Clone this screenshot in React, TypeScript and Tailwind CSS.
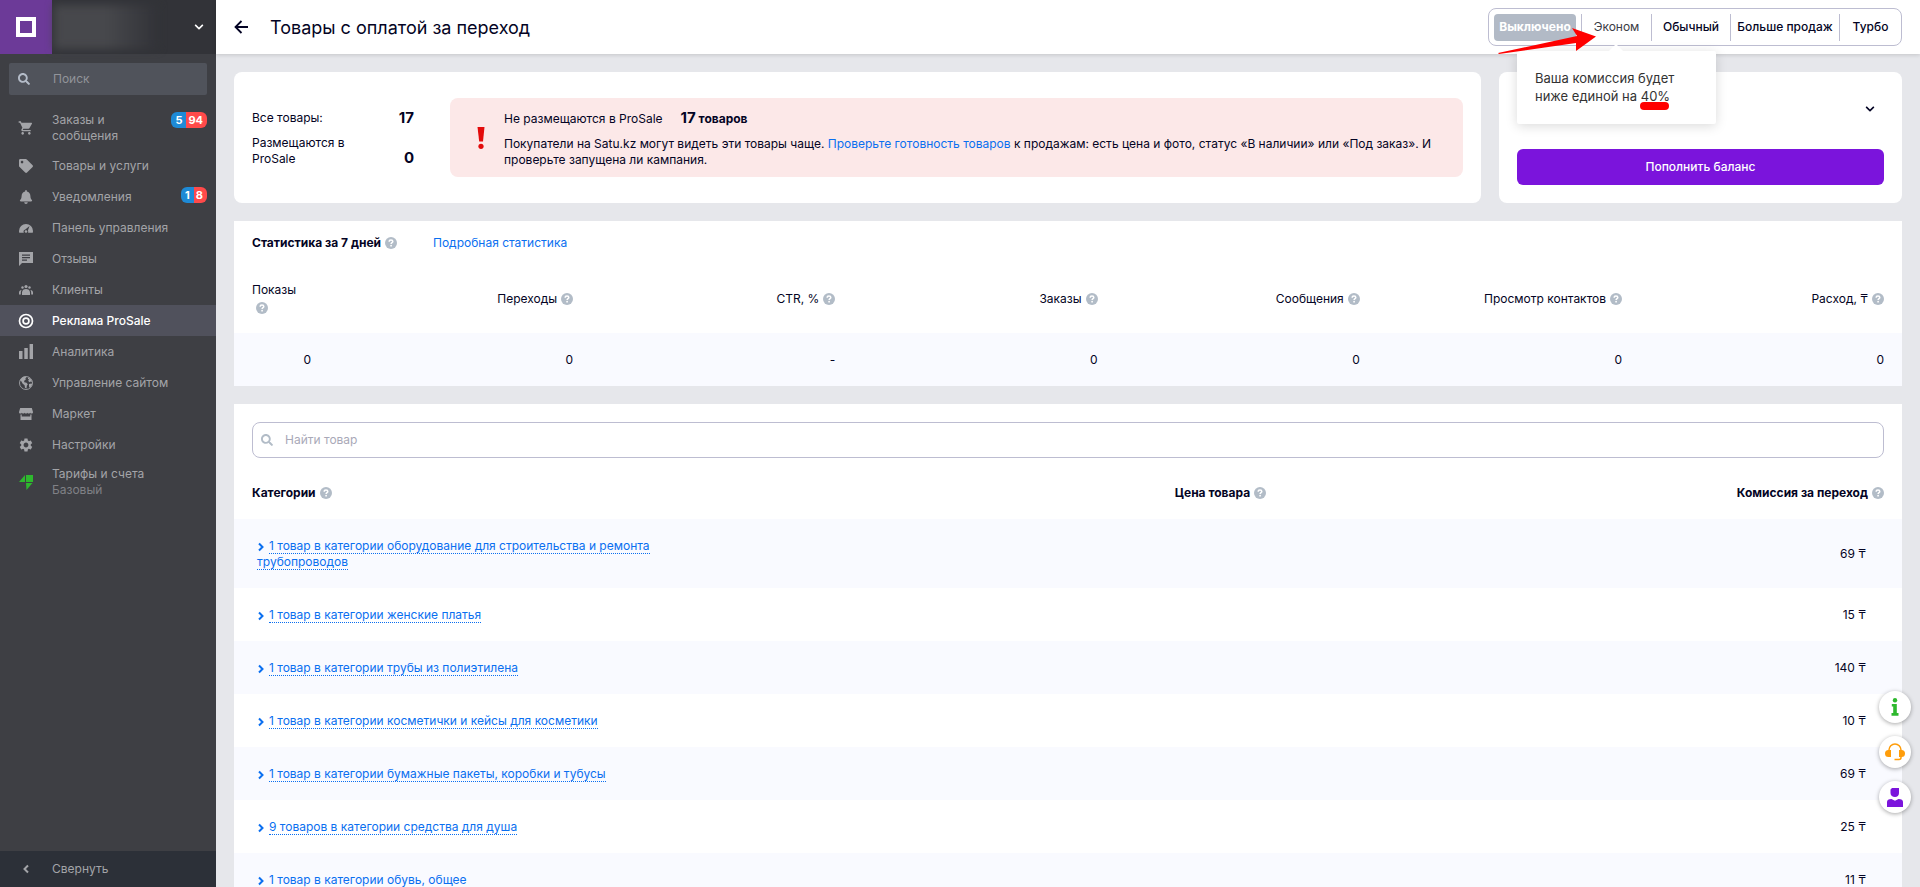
import type { ReactNode } from 'react';
import { FaSearch, FaTag, FaBell, FaChevronDown } from 'react-icons/fa';
import { MdSettings, MdShoppingCart } from 'react-icons/md';

interface MenuItem {
  label: string;
  icon: ReactNode;
  note?: string;
  badges?: [number, number];
  active?: boolean;
}

interface StatColumn {
  title: string;
  value: string;
}

interface Category {
  title: string;
  price: number;
}

const menu: MenuItem[] = [
  { label: 'Заказы и сообщения', icon: <MdShoppingCart className="h-4 w-4" />, badges: [5, 94] },
  { label: 'Товары и услуги', icon: <FaTag /> },
  { label: 'Уведомления', icon: <FaBell />, badges: [1, 8] },
  { label: 'Панель управления', icon: <GaugeIcon /> },
  { label: 'Отзывы', icon: <ReviewIcon /> },
  { label: 'Клиенты', icon: <PeopleIcon /> },
  { label: 'Реклама ProSale', icon: <TargetIcon />, active: true },
  { label: 'Аналитика', icon: <BarsIcon /> },
  { label: 'Управление сайтом', icon: <GlobeIcon /> },
  { label: 'Маркет', icon: <StoreIcon /> },
  { label: 'Настройки', icon: <MdSettings className="h-4 w-4" /> },
  { label: 'Тарифы и счета', icon: <PlanIcon />, note: 'Базовый' },
];

const stats: StatColumn[] = [
  { title: 'Показы', value: '0' },
  { title: 'Переходы', value: '0' },
  { title: 'CTR, %', value: '-' },
  { title: 'Заказы', value: '0' },
  { title: 'Сообщения', value: '0' },
  { title: 'Просмотр контактов', value: '0' },
  { title: 'Расход, ₸', value: '0' },
];

const categories: Category[] = [
  { title: '1 товар в категории оборудование для строительства и ремонта трубопроводов', price: 69 },
  { title: '1 товар в категории женские платья', price: 15 },
  { title: '1 товар в категории трубы из полиэтилена', price: 140 },
  { title: '1 товар в категории косметички и кейсы для косметики', price: 10 },
  { title: '1 товар в категории бумажные пакеты, коробки и тубусы', price: 69 },
  { title: '9 товаров в категории средства для душа', price: 25 },
  { title: '1 товар в категории обувь, общее', price: 11 },
];

function GaugeIcon() {
  return (
    <svg viewBox="0 0 14 14" width="14" height="14" fill="currentColor">
      <path d="M7 3a7 7 0 0 0-7 7c0 .7.1 1.200.3 1.700h4.500A2.300 2.300 0 0 1 6.300 8.600L10.500 5 8.900 9.600c.2.400.3.800.3 1.200 0 .3 0 .6-.1.900h4.600c.2-.5.300-1 .3-1.700a7 7 0 0 0-7-7z" />
      <circle cx="7" cy="10.500" r="1.300" />
    </svg>
  );
}

function ReviewIcon() {
  return (
    <svg viewBox="0 0 14 14" width="14" height="14" fill="currentColor">
      <path fillRule="evenodd" d="M0 0h14v11H3l-3 3zM3 2.500v1.200h8V2.500zM3 5v1.200h8V5zM3 7.500v1.200h5V7.500z" />
    </svg>
  );
}

function PeopleIcon() {
  return (
    <svg viewBox="0 0 14 14" width="14" height="14" fill="currentColor">
      <circle cx="7" cy="3.500" r="1.600" />
      <circle cx="3.500" cy="4.500" r="1.200" />
      <circle cx="10.500" cy="4.500" r="1.200" />
      <path d="M3 12V9.500C3 7 5 6 7 6s4 1 4 3.500V12zM0 11.500V9.500C0 8 1.200 7 2.600 7c-.5.700-.8 1.500-.8 2.500v2zM14 11.500V9.500C14 8 12.800 7 11.400 7c.5.700.8 1.500.8 2.500v2z" />
    </svg>
  );
}

function TargetIcon() {
  return (
    <svg viewBox="0 0 16 16" width="16" height="16" fill="none" stroke="currentColor" strokeWidth="1.700">
      <circle cx="8" cy="8" r="6.500" />
      <circle cx="8" cy="8" r="2.900" />
    </svg>
  );
}

function BarsIcon() {
  return (
    <svg viewBox="0 0 14 15" width="14" height="15" fill="currentColor">
      <path d="M0 7h3.500v8H0zM5.300 4h3.500v11H5.300zM10.600 0H14v15h-3.400z" />
    </svg>
  );
}

function GlobeIcon() {
  return (
    <svg viewBox="0 0 14 14" width="14" height="14" fill="none" stroke="currentColor">
      <circle cx="7" cy="7" r="6.500" strokeWidth=".9" />
      <path
        fill="currentColor"
        stroke="none"
        d="M1 4.500C2 2 4.300.6 6.500.5l1 1.500-1.300.6.6 1.200-1.700 1 .2 1.500 2.200.4 1.300 1.500-1 1.600-.3 2.700-1.500-.8-.4-2.400L3.500 7.500 2.300 5.300zM9 1.200l3 2 1.300 2.600-1.500-.3-1.300.8-1.400-1.500L10.300 3.500 9 3zM10 8l2.600-.6.6 1.300-2.200 3.300-1-1.500z"
      />
    </svg>
  );
}

function StoreIcon() {
  return (
    <svg viewBox="0 0 14 14" width="14" height="14" fill="currentColor">
      <path fillRule="evenodd" d="M1.200 1h11.600L14 5c0 1-.6 1.600-1.400 1.600-.9 0-1.500-.6-1.500-1.200 0 .7-.6 1.200-1.400 1.200S8.400 6 8.400 5.400C8.400 6 7.800 6.600 7 6.600S5.600 6 5.600 5.400c0 .6-.6 1.200-1.300 1.200-.8 0-1.400-.5-1.400-1.200 0 .6-.6 1.200-1.500 1.200C.6 6.600 0 6 0 5zM1.500 7.500h1.200V9.500h8.600V7.500h1.200V13h-11z" />
    </svg>
  );
}

function PlanIcon() {
  return (
    <svg viewBox="0 0 14 15" width="14" height="15" fill="#2eb82e">
      <path d="M6 0v7H0zM7 0h7v7H7zM7 8h6.500L7.500 15z" />
    </svg>
  );
}

function Chevron({ className }: { className: string }) {
  return (
    <svg viewBox="0 0 8 10" className={className} fill="none" stroke="currentColor" strokeWidth="2">
      <path d="M2 1.500 5.500 5 2 8.500" />
    </svg>
  );
}

function Help({ className = 'ml-1' }: { className?: string }) {
  return (
    <svg viewBox="0 0 12 12" className={`inline-block h-3 w-3 shrink-0 align-[-2px] ${className}`}>
      <circle cx="6" cy="6" r="6" fill="#b2bcc7" />
      <path d="M4.200 4.700C4.200 3.600 5 3 6 3s1.800.6 1.800 1.500c0 1.200-1.700 1.200-1.700 2.500" fill="none" stroke="#fff" strokeWidth="1.500" />
      <circle cx="6.100" cy="8.700" r=".9" fill="#fff" />
    </svg>
  );
}

function Sidebar() {
  return (
    <aside className="flex w-[216px] shrink-0 flex-col bg-[#3e3f44] text-[#a3a4a8]">
      <div className="flex h-[54px] bg-[#323338]">
        <a href="#home" aria-label="Главная" className="flex w-[52px] items-center justify-center bg-[#6c3a98]">
          <span className="block h-5 w-5 border-4 border-white" />
        </a>
        <button type="button" aria-label="Меню компании" className="flex flex-1 items-center justify-between pr-3 pl-0.5 text-white">
          <span className="h-11 w-26 bg-linear-to-r from-[#47484c] from-50% to-[#323338] blur-xs" />
          <FaChevronDown className="h-2.5 w-2.5" />
        </button>
      </div>
      <label className="mx-[9px] mt-[9px] mb-[11px] flex h-8 items-center rounded-xs bg-[#50535b] pl-[9px]">
        <FaSearch className="h-3 w-3 text-[#b4bcc8]" />
        <input type="text" placeholder="Поиск" aria-label="Поиск" className="ml-[23px] w-32 bg-transparent outline-none placeholder:text-[#92949a]" />
      </label>
      <nav className="flex-1">
        {menu.map((item) => (
          <a
            key={item.label}
            href="#menu"
            className={`flex min-h-[31px] items-center py-1.5 pr-[9px] leading-4 ${item.active ? 'bg-[#50515c] font-medium text-white' : ''}`}
          >
            <span className="flex w-[52px] shrink-0 items-center justify-center text-[14px]">{item.icon}</span>
            <span className="flex-1">
              {item.label}
              {item.note && <span className="block text-[#808186]">{item.note}</span>}
            </span>
            {item.badges && (
              <span className="flex self-start overflow-hidden rounded-md text-[11px] font-bold text-white">
                <span className="bg-[#1e8ad6] px-1">{item.badges[0]}</span>
                <span className="bg-[#ff4a4a] pr-1 pl-0.5">{item.badges[1]}</span>
              </span>
            )}
          </a>
        ))}
      </nav>
      <button type="button" className="flex h-9 items-center bg-[#2c3038]">
        <span className="flex w-[52px] justify-center">
          <Chevron className="h-2.5 w-2 rotate-180" />
        </span>
        Свернуть
      </button>
    </aside>
  );
}

function ModeSwitch() {
  return (
    <div className="flex h-[38px] w-[414px] items-center rounded-lg border border-[#bdbdd1] font-medium">
      <button type="button" className="mr-[5px] ml-[5px] h-[27px] w-[82px] rounded-sm bg-[#b2bac6] font-bold text-white">
        Выключено
      </button>
      <div className="relative h-[27px] w-[70px] border-l border-[#bdbdd1] font-normal">
        <button type="button" className="h-full w-full text-[#3b3b45]">
          Эконом
        </button>
        <EconomyHint />
      </div>
      <button type="button" className="h-[27px] w-[79px] border-l border-[#bdbdd1]">
        Обычный
      </button>
      <button type="button" className="h-[27px] w-[109px] border-l border-[#bdbdd1]">
        Больше продаж
      </button>
      <button type="button" className="h-[27px] flex-1 border-l border-[#bdbdd1]">
        Турбо
      </button>
    </div>
  );
}

function EconomyHint() {
  return (
    <>
      <div role="tooltip" className="absolute top-[37px] left-[-65px] z-20 h-[73px] w-[199px] rounded-xs bg-white px-[18px] pt-[18px] text-left text-[13px] leading-[18px] text-[#333] shadow-[0_2px_12px_rgba(0,0,0,0.15)]">
        <span className="absolute -top-[5px] left-[94px] h-2.5 w-2.5 rotate-45 bg-white" />
        <span className="block">Ваша комиссия будет</span>
        ниже единой на{' '}
        <span className="relative inline-block">
          40%
          <span className="absolute -bottom-[5px] -left-px h-2 w-[29px] rounded-full bg-[#f00]" />
        </span>
      </div>
      <svg viewBox="0 0 100 28" className="absolute top-[13px] left-[-85px] z-30 h-7 w-[100px] fill-[#f00]">
        <path d="M1 26 80 9 75 1 99 9.500 79 24 79 16 2 27z" />
      </svg>
    </>
  );
}

function Header() {
  return (
    <header className="relative z-10 flex h-[54px] items-center bg-white px-[18px] shadow-[0_1px_4px_rgba(0,0,0,0.15)]">
      <button type="button" aria-label="Назад" className="mr-[22px]">
        <svg viewBox="0 0 14 14" width="14" height="14" fill="none" stroke="currentColor" strokeWidth="1.800">
          <path d="M14 7H1.500M7.500 1l-6 6 6 6" />
        </svg>
      </button>
      <h1 className="flex-1 pt-0.5 text-[18px]">Товары с оплатой за переход</h1>
      <ModeSwitch />
    </header>
  );
}

function Summary() {
  return (
    <div className="flex gap-[18px]">
      <section className="flex min-h-[131px] flex-1 items-center rounded-lg bg-white px-[18px]">
        <dl className="w-[162px]">
          <div className="mb-2 flex items-center justify-between">
            <dt>Все товары:</dt>
            <dd className="text-[15px] leading-[18px] font-bold">17</dd>
          </div>
          <div className="flex items-end justify-between">
            <dt className="w-24">Размещаются в ProSale</dt>
            <dd className="text-[15px] leading-[18px] font-bold">0</dd>
          </div>
        </dl>
        <div className="ml-9 flex min-h-[79px] flex-1 items-center rounded-lg bg-[#fce8e8]">
          <span className="flex w-[54px] shrink-0 justify-center pl-2">
            <svg viewBox="0 0 8 22" width="8" height="22" fill="#e30b0b">
              <path d="M.5 0h7L6 14.500H2.200z" />
              <circle cx="4" cy="19.300" r="2.600" />
            </svg>
          </span>
          <div className="pt-0.5 pr-[18px]">
            <p className="mb-2 leading-[18px]">
              Не размещаются в ProSale
              <b className="ml-[18px]">
                <span className="text-[15px]">17</span> товаров
              </b>
            </p>
            <p>
              Покупатели на Satu.kz могут видеть эти товары чаще.{' '}
              <a href="#ready" className="text-[#0a6ff0]">Проверьте готовность товаров</a> к продажам: есть цена и
              фото, статус «В наличии» или «Под заказ». И проверьте запущена ли кампания.
            </p>
          </div>
        </div>
      </section>
      <section className="flex w-[403px] flex-col justify-between rounded-lg bg-white p-[18px]">
        <div className="flex h-[38px] items-center justify-end pr-[9px]">
          <button type="button" aria-label="Показать баланс">
            <FaChevronDown className="h-2.5 w-2.5" />
          </button>
        </div>
        <button type="button" className="h-9 w-full rounded-md bg-[#7b14dc] font-medium text-white">
          Пополнить баланс
        </button>
      </section>
    </div>
  );
}

function Stats() {
  return (
    <section className="bg-white">
      <div className="flex h-11 items-center px-[18px]">
        <h2 className="font-bold">
          Статистика за 7 дней
          <Help />
        </h2>
        <a href="#stats" className="ml-9 text-[#0a6ff0]">Подробная статистика</a>
      </div>
      <table className="w-full table-fixed text-right">
        <thead>
          <tr className="h-[68px]">
            {stats.map((col, i) => (
              <th
                key={col.title}
                scope="col"
                className={i === 0 ? 'w-[77px] pl-[18px] text-left leading-[18px] font-normal' : 'font-normal last:w-[280px] last:pr-[18px]'}
              >
                {col.title}
                {i === 0 ? <Help className="mr-8 ml-1" /> : <Help />}
              </th>
            ))}
          </tr>
        </thead>
        <tbody>
          <tr className="h-[53px] bg-[#f9faff]">
            {stats.map((col) => (
              <td key={col.title} className="last:pr-[18px]">{col.value}</td>
            ))}
          </tr>
        </tbody>
      </table>
    </section>
  );
}

function Products() {
  return (
    <section className="bg-white pt-[18px]">
      <label className="mx-[18px] mb-[9px] flex h-9 items-center rounded-lg border border-[#bdbdd1] pl-2">
        <FaSearch className="h-3 w-3 text-[#b2bcc7]" />
        <input type="search" placeholder="Найти товар" aria-label="Найти товар" className="ml-3 flex-1 bg-transparent outline-none placeholder:text-[#a9a9b8]" />
      </label>
      <table className="w-full table-fixed">
        <thead>
          <tr className="h-[52px] text-right">
            <th scope="col" className="w-[26%] pl-[18px] text-left">Категории<Help /></th>
            <th scope="col" className="w-[36%] pr-0.5">Цена товара<Help /></th>
            <th scope="col" className="pr-[18px]">Комиссия за переход<Help /></th>
          </tr>
        </thead>
        <tbody>
          {categories.map((category) => (
            <tr key={category.title} className="odd:bg-[#f9faff]">
              <td className="pt-[19px] pr-2 pb-[18px] pl-[23px]">
                <a href="#category" className="text-[#0a6ff0]">
                  <Chevron className="mr-1 inline-block h-2.5 w-2 align-[-2px]" />
                  <span className="border-b border-dotted border-[#0a6ff0]">{category.title}</span>
                </a>
              </td>
              <td />
              <td className="pr-9 text-right">{category.price} ₸</td>
            </tr>
          ))}
        </tbody>
      </table>
    </section>
  );
}

function FloatingButtons() {
  const button = 'flex h-8 w-8 items-center justify-center rounded-full bg-white shadow-[0_1px_4px_rgba(0,0,0,0.35)]';

  return (
    <div className="fixed right-[9px] bottom-[74px] z-30 flex flex-col gap-[13px]">
      <button type="button" aria-label="Информация" className={button}>
        <svg viewBox="0 0 8 18" width="8" height="18" fill="#2eb82e">
          <circle cx="4" cy="2.200" r="2.200" />
          <path d="M.8 6h5v9H7.500v2.800H.5V15h1.700V8.600H.8z" />
        </svg>
      </button>
      <button type="button" aria-label="Поддержка" className={button}>
        <svg viewBox="0 0 20 18" width="20" height="18" fill="#ff9d0a">
          <path d="M4 9V7a6 6 0 0 1 12 0v7.500a2 2 0 0 1-2 2H9.500" fill="none" stroke="#ff9d0a" strokeWidth="1.500" />
          <path d="M6 7v7H3.500a3.500 3.500 0 0 1 0-7zM14 7v7h2.500a3.500 3.500 0 0 0 0-7z" />
        </svg>
      </button>
      <button type="button" aria-label="Менеджер" className={button}>
        <svg viewBox="0 0 16 19" width="16" height="19" fill="#7b14dc">
          <path d="M5 0h7v5c0 2.500-1.600 4-4 4S3.500 7.500 3.500 5V1.500zM0 19v-5c0-2 1.500-3 4.500-3L8 12.800 11.500 11c3 0 4.500 1 4.500 3v5z" />
        </svg>
      </button>
    </div>
  );
}

export default function App() {
  return (
    <div className="flex h-screen overflow-hidden bg-[#e6e7eb] font-[Inter,'Noto_Sans',sans-serif] text-[12px] leading-4 text-[#040424]">
      <Sidebar />
      <div className="flex min-w-0 flex-1 flex-col">
        <Header />
        <main className="flex flex-1 flex-col gap-[18px] overflow-hidden p-[18px] [&>*]:shrink-0">
          <Summary />
          <Stats />
          <Products />
        </main>
      </div>
      <FloatingButtons />
    </div>
  );
}
